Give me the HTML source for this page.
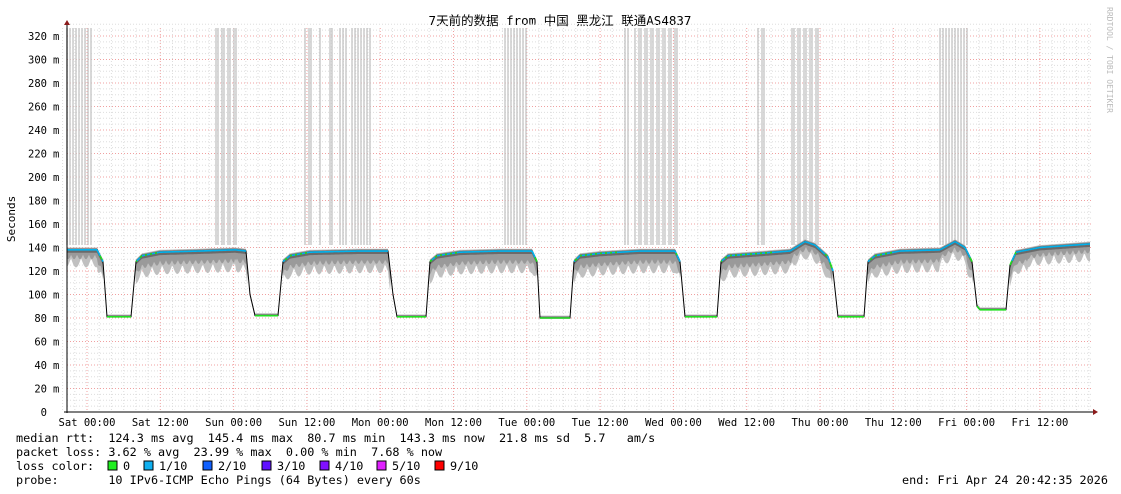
<!DOCTYPE html>
<html><head><meta charset="utf-8"><style>
body{margin:0;background:#fff;width:1121px;height:494px;overflow:hidden}
svg{display:block}
text{font-family:"DejaVu Sans Mono","Liberation Mono","Noto Sans CJK SC",monospace;font-size:11.8px;fill:#000}
</style></head><body>
<svg id="s" width="1121" height="494" xmlns="http://www.w3.org/2000/svg">
<text x="560" y="25" text-anchor="middle" style="font-size:12.5px">7天前的数据 from 中国 黑龙江 联通AS4837</text>
<text transform="translate(15,219) rotate(-90)" text-anchor="middle" style="font-size:11px">Seconds</text>
<text transform="translate(1107,60) rotate(90)" text-anchor="middle" style="font-size:8px;fill:#bbb">RRDTOOL / TOBI OETIKER</text>
<g id="g"></g>
<text x="16" y="442" xml:space="preserve">median rtt:  124.3 ms avg  145.4 ms max  80.7 ms min  143.3 ms now  21.8 ms sd  5.7   am/s</text>
<text x="16" y="456" xml:space="preserve">packet loss: 3.62 % avg  23.99 % max  0.00 % min  7.68 % now</text>
<text x="16" y="470" xml:space="preserve">loss color:  </text>
<text x="16" y="484" xml:space="preserve">probe:       10 IPv6-ICMP Echo Pings (64 Bytes) every 60s</text>
<text x="902" y="484">end: Fri Apr 24 20:42:35 2026</text>
</svg>
<script>
var g=document.getElementById('g'),h='';
function Y(v){return 412-v*1.175}
for(var v=0;v<=330;v+=5){var y=Y(v);h+='<line x1="67" x2="1092" y1="'+y+'" y2="'+y+'" stroke="'+(v%20==0&&v>0?'#f0a0a0':'#ddd')+'" stroke-dasharray="1,2"/>';}
for(var x=67+20-73.3/6*2;x<1092;x+=73.3/6){var red=Math.abs(((x-87)/73.3)-Math.round((x-87)/73.3))<0.02;h+='<line y1="28" y2="412" x1="'+x.toFixed(1)+'" x2="'+x.toFixed(1)+'" stroke="'+(red?'#f0a0a0':'#ddd')+'" stroke-dasharray="1,2"/>';}
var sp=[[67,93],[216,236],[305,312],[320,323],[330,333],[340,346],[352,372],[505,527],[625,628],[635,641],[645,680],[758,765],[792,820],[940,967]];
sp.forEach(function(r){for(var x=r[0];x<=r[1];x+=2+((x*7)%3)){h+='<line x1="'+x+'" x2="'+x+'" y1="28" y2="245" stroke="#c8c8c8" stroke-width="1.4"/>';}});
var k=[[67,138],[97,138],[103,128],[107,81],[131,81],[136,128],[142,133],[160,136],[200,137],[235,138],[246,137],[250,100],[255,82],[278,82],[283,128],[290,133],[310,136],[360,137],[388,137],[393,100],[397,81],[426,81],[430,128],[437,133],[460,136],[500,137],[532,137],[537,128],[540,80],[570,80],[574,128],[580,133],[600,135],[640,137],[675,137],[680,128],[685,81],[717,81],[721,128],[728,133],[760,135],[790,137],[805,145],[815,142],[828,132],[833,120],[838,81],[864,81],[868,128],[875,133],[900,137],[940,138],[955,145],[965,140],[972,128],[977,90],[980,87],[1006,87],[1010,125],[1016,136],[1040,140],[1090,143]];
function f(x){for(var i=1;i<k.length;i++){if(x<=k[i][0]){var a=k[i-1],b=k[i];return a[1]+(b[1]-a[1])*(x-a[0])/(b[0]-a[0]);}}return 143}
function band(lw,uw,col,op){var up='',lo='';for(var x=67;x<=1090;x++){var v=f(x);var w=(v>120)?lw(x,v):0.5;up+=x+','+Y(v+uw).toFixed(1)+' ';lo=x+','+Y(v-w).toFixed(1)+' '+lo;}h+='<polygon points="'+up+lo+'" fill="'+col+'" opacity="'+op+'"/>';}
band(function(x,v){return 6+8*Math.abs(Math.sin(x*0.31))+(v<138?5:1);},2,'#c0c0c0',1);
band(function(x,v){return 4+4*Math.abs(Math.sin(x*0.53))+(v<138?3:0);},1.5,'#9a9a9a',1);
band(function(x,v){return 2.5;},1,'#6a6a6a',1);
var pts='';for(var x=67;x<=1090;x++)pts+=x+','+Y(f(x)).toFixed(1)+' ';
h+='<polyline points="'+pts+'" fill="none" stroke="#000" stroke-width="1"/>';
for(var x=67;x<1090;x++){var v=f(x),v2=f(x+1);var c=v<110?'#20e020':(v>=136?'#00b4f0':((x%5)<2?'#20e020':'#00b4f0'));if(Math.abs(v-v2)>3)continue;h+='<line x1="'+x+'" x2="'+(x+1)+'" y1="'+Y(v)+'" y2="'+Y(v2)+'" stroke="'+c+'" stroke-width="1.6"/>';}
h+='<line x1="67" x2="67" y1="24" y2="413" stroke="#000"/><line x1="64" x2="1094" y1="412" y2="412" stroke="#000"/>';
h+='<polygon points="64,25 70,25 67,20" fill="#8b1a1a"/><polygon points="1093,409 1093,415 1098,412" fill="#8b1a1a"/>';
for(var v=0;v<=320;v+=20){h+='<text x="47" y="'+(Y(v)+4)+'" text-anchor="end" style="font-size:10.5px">'+v+'</text>'+(v?'<text x="53" y="'+(Y(v)+4)+'" style="font-size:10.5px">m</text>':'');}
var L=['Sat 00:00','Sat 12:00','Sun 00:00','Sun 12:00','Mon 00:00','Mon 12:00','Tue 00:00','Tue 12:00','Wed 00:00','Wed 12:00','Thu 00:00','Thu 12:00','Fri 00:00','Fri 12:00'];
L.forEach(function(t,i){h+='<text x="'+(87+i*73.3)+'" y="426" text-anchor="middle" style="font-size:10.5px">'+t+'</text>';});
var lc=[['#20f020','0',108],['#10b0f0','1/10',144],['#1060ff','2/10',203],['#6010ff','3/10',262],['#8010ff','4/10',320],['#e020ff','5/10',377],['#ff0000','9/10',435]];
lc.forEach(function(c){h+='<rect x="'+c[2]+'" y="461" width="9" height="9" fill="'+c[0]+'" stroke="#000" stroke-width="1"/><text x="'+(c[2]+15)+'" y="470">'+c[1]+'</text>';});
g.innerHTML=h;
</script>
</body></html>
